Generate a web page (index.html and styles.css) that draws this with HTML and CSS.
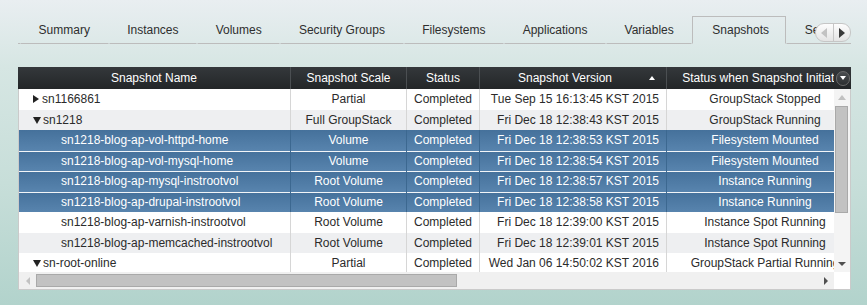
FILE: index.html
```html
<!DOCTYPE html>
<html lang="en">
<head>
    <meta charset="UTF-8" />
    <title>Snapshots</title>
    <link rel="stylesheet" href="styles.css">
</head>
<body>
    <div class="page">
        <div class="tabs">
            <div class="tab-strip">
                <div class="tab-lead"></div>
                <div class="tab">Summary</div>
                <div class="tab">Instances</div>
                <div class="tab">Volumes</div>
                <div class="tab">Security Groups</div>
                <div class="tab">Filesystems</div>
                <div class="tab">Applications</div>
                <div class="tab">Variables</div>
                <div class="tab active">Snapshots</div>
                <div class="tab">Settings</div>
                <div class="tab">Monitoring</div>
            </div>
            <div class="tab-scroller">
                <span class="ts-btn"><i class="arr-left off"></i></span>
                <span class="ts-btn"><i class="arr-right"></i></span>
            </div>
        </div>

        <div class="grid">
            <div class="grid-head">
                <div class="head-cells">
                    <div class="hc c-name">Snapshot Name</div>
                    <div class="hc c-scale">Snapshot Scale</div>
                    <div class="hc c-status">Status</div>
                    <div class="hc c-version sorted">Snapshot Version<i class="sort-up"></i></div>
                    <div class="hc c-when">Status when Snapshot Initiated</div>
                </div>
                <div class="head-corner"><span class="menu-btn"><i class="arr-down small"></i></span></div>
            </div>

            <div class="grid-body">
                <div class="rows">
                    <div class="row">
                        <div class="cell c-name parent"><i class="arr-right"></i>sn1166861</div>
                        <div class="cell c-scale">Partial</div>
                        <div class="cell c-status">Completed</div>
                        <div class="cell c-version">Tue Sep 15 16:13:45 KST 2015</div>
                        <div class="cell c-when">GroupStack Stopped</div>
                    </div>
                    <div class="row alt">
                        <div class="cell c-name parent"><i class="arr-down"></i>sn1218</div>
                        <div class="cell c-scale">Full GroupStack</div>
                        <div class="cell c-status">Completed</div>
                        <div class="cell c-version">Fri Dec 18 12:38:43 KST 2015</div>
                        <div class="cell c-when">GroupStack Running</div>
                    </div>
                    <div class="row sel">
                        <div class="cell c-name child">sn1218-blog-ap-vol-httpd-home</div>
                        <div class="cell c-scale">Volume</div>
                        <div class="cell c-status">Completed</div>
                        <div class="cell c-version">Fri Dec 18 12:38:53 KST 2015</div>
                        <div class="cell c-when">Filesystem Mounted</div>
                    </div>
                    <div class="row sel">
                        <div class="cell c-name child">sn1218-blog-ap-vol-mysql-home</div>
                        <div class="cell c-scale">Volume</div>
                        <div class="cell c-status">Completed</div>
                        <div class="cell c-version">Fri Dec 18 12:38:54 KST 2015</div>
                        <div class="cell c-when">Filesystem Mounted</div>
                    </div>
                    <div class="row sel">
                        <div class="cell c-name child">sn1218-blog-ap-mysql-instrootvol</div>
                        <div class="cell c-scale">Root Volume</div>
                        <div class="cell c-status">Completed</div>
                        <div class="cell c-version">Fri Dec 18 12:38:57 KST 2015</div>
                        <div class="cell c-when">Instance Running</div>
                    </div>
                    <div class="row sel">
                        <div class="cell c-name child">sn1218-blog-ap-drupal-instrootvol</div>
                        <div class="cell c-scale">Root Volume</div>
                        <div class="cell c-status">Completed</div>
                        <div class="cell c-version">Fri Dec 18 12:38:58 KST 2015</div>
                        <div class="cell c-when">Instance Running</div>
                    </div>
                    <div class="row">
                        <div class="cell c-name child">sn1218-blog-ap-varnish-instrootvol</div>
                        <div class="cell c-scale">Root Volume</div>
                        <div class="cell c-status">Completed</div>
                        <div class="cell c-version">Fri Dec 18 12:39:00 KST 2015</div>
                        <div class="cell c-when">Instance Spot Running</div>
                    </div>
                    <div class="row alt">
                        <div class="cell c-name child">sn1218-blog-ap-memcached-instrootvol</div>
                        <div class="cell c-scale">Root Volume</div>
                        <div class="cell c-status">Completed</div>
                        <div class="cell c-version">Fri Dec 18 12:39:01 KST 2015</div>
                        <div class="cell c-when">Instance Spot Running</div>
                    </div>
                    <div class="row">
                        <div class="cell c-name parent"><i class="arr-down"></i>sn-root-online</div>
                        <div class="cell c-scale">Partial</div>
                        <div class="cell c-status">Completed</div>
                        <div class="cell c-version">Wed Jan 06 14:50:02 KST 2016</div>
                        <div class="cell c-when">GroupStack Partial Running</div>
                    </div>
                </div>
                <div class="vscroll">
                    <div class="sb-btn"><i class="arr-up off"></i></div>
                    <div class="v-thumb"></div>
                    <div class="sb-fill"></div>
                    <div class="sb-btn"><i class="arr-down dark"></i></div>
                </div>
            </div>

            <div class="grid-foot">
                <div class="hscroll">
                    <div class="sb-btn"><i class="arr-left off"></i></div>
                    <div class="h-thumb"></div>
                    <div class="sb-fill"></div>
                    <div class="sb-btn"><i class="arr-right dark"></i></div>
                </div>
                <div class="foot-corner"></div>
            </div>
        </div>
    </div>
</body>
</html>
```

FILE: styles.css
```css
html, body {
    margin: 0;
    padding: 0;
    height: 100%;
}

body {
    background: linear-gradient(to bottom, #e9eef1 0%, #d6e6e3 22%, #c7ded9 60%, #b2d3cc 100%);
    font-family: "Liberation Sans", Arial, sans-serif;
    font-size: 12px;
    color: #2b2b2b;
}

.page {
    padding: 16px 16px 0 18px;
    width: 833px;
}

/* tabs */
.tabs {
    position: relative;
}

.tab-strip {
    display: flex;
    overflow: hidden;
    width: 833px;
}

.tab-lead {
    width: 2px;
    flex-shrink: 0;
    border-bottom: 1px solid #bcbcbc;
}

.tab {
    flex-shrink: 0;
    height: 26px;
    line-height: 26px;
    padding: 0 17.6px;
    border: 1px solid transparent;
    border-bottom: 1px solid #bcbcbc;
    white-space: nowrap;
    color: #2e2e2e;
}

.tab.active {
    border-color: #bcbcbc;
    border-bottom-color: transparent;
    padding: 0 16px 0 19px;
}

.tab-scroller {
    position: absolute;
    left: 797px;
    top: 7px;
    width: 34px;
    height: 17px;
    border: 1px solid #c6c6c6;
    border-radius: 9px;
    background: linear-gradient(to bottom, #fdfdfd, #e4e4e4);
    display: flex;
    overflow: hidden;
}

.ts-btn {
    flex: 1;
    display: flex;
    align-items: center;
    justify-content: center;
}

.ts-btn + .ts-btn {
    border-left: 1px solid #c6c6c6;
}

/* little triangles */
.arr-left, .arr-right, .arr-up, .arr-down, .sort-up {
    display: inline-block;
    width: 0;
    height: 0;
}

.arr-right {
    border-top: 4px solid transparent;
    border-bottom: 4px solid transparent;
    border-left: 6px solid #222;
}

.arr-left {
    border-top: 4px solid transparent;
    border-bottom: 4px solid transparent;
    border-right: 6px solid #222;
}

.arr-down {
    border-left: 4px solid transparent;
    border-right: 4px solid transparent;
    border-top: 7px solid #222;
}

.arr-up {
    border-left: 4px solid transparent;
    border-right: 4px solid transparent;
    border-bottom: 5px solid #222;
}

.arr-left.off { border-right-color: #c2c2c2; }
.arr-up.off { border-bottom-color: #c2c2c2; }
.arr-right.dark { border-left-color: #505050; border-left-width: 4px; border-top-width: 4px; border-bottom-width: 4px; }
.arr-down.dark { border-top-color: #505050; border-top-width: 4px; }
.ts-btn .arr-left, .ts-btn .arr-right { border-top-width: 5px; border-bottom-width: 5px; }
.ts-btn .arr-right { border-left-color: #3a3a3a; border-left-width: 6px; }
.hscroll .arr-left { border-top-width: 4px; border-bottom-width: 4px; border-right-width: 4px; }

/* grid */
.grid {
    margin-top: 23px;
    width: 831px;
    border: 1px solid #cacaca;
    border-top: none;
    background: #fff;
}

.grid-head {
    display: flex;
    height: 22px;
    margin: 0 -1px;
    background: linear-gradient(to bottom, #34383b, #232628);
    color: #fff;
}

.head-cells {
    display: flex;
    width: 816px;
    overflow: hidden;
}

.hc {
    flex-shrink: 0;
    box-sizing: border-box;
    line-height: 22px;
    text-align: center;
    white-space: nowrap;
    border-right: 1px solid #4b4f52;
    position: relative;
}

.hc.c-name { width: 273px; }
.hc.sorted { padding-right: 16px; }

.sort-up {
    position: absolute;
    right: 11px;
    top: 9px;
    border-left: 3px solid transparent;
    border-right: 3px solid transparent;
    border-bottom: 4px solid #fff;
}

.head-corner {
    width: 17px;
    display: flex;
    align-items: center;
}

.menu-btn {
    width: 12px;
    height: 13px;
    border-radius: 7px;
    border: 1px solid #6a6a6a;
    background: linear-gradient(to bottom, #4a4d50, #2c2f31);
    display: flex;
    align-items: center;
    justify-content: center;
    margin-left: 2px;
}

.arr-down.small {
    border-left-width: 3px;
    border-right-width: 3px;
    border-top: 4px solid #fff;
}

.grid-body {
    display: flex;
    height: 183px;
}

.rows {
    width: 815px;
    overflow: hidden;
}

.row {
    display: flex;
    height: 20.5px;
    line-height: 20.5px;
    background: #fff;
}

.row.alt {
    background: #eeeff1;
}

.row.sel {
    background: linear-gradient(to bottom, #45719b, #5884ae);
    color: #fff;
}

.row.sel + .row.sel {
    box-shadow: inset 0 1px 0 #f2f5f8;
}

.cell {
    flex-shrink: 0;
    box-sizing: border-box;
    white-space: nowrap;
    overflow: hidden;
    border-right: 1px solid #d6d6d6;
    padding: 0 6px;
}

.row.sel .cell {
    border-right-color: #3c6890;
}

.c-name { width: 272px; }
.c-scale { width: 116px; text-align: center; }
.c-status { width: 73px; text-align: center; padding: 0; }
.c-version { width: 187px; text-align: right; padding-right: 7px; }
.c-when { width: 196px; text-align: center; border-right: none; }
.hc.c-version { text-align: center; }

.cell.parent {
    padding-left: 14px;
}

.cell.parent i {
    margin-right: 2px;
    vertical-align: 0;
}

.cell.parent .arr-right {
    border-top-width: 4px;
    border-bottom-width: 4px;
    border-left-width: 6px;
    margin-right: 3px;
}

.cell.child {
    padding-left: 42px;
}

/* scrollbars */
.vscroll {
    width: 16px;
    background: #f4f4f4;
    display: flex;
    flex-direction: column;
}

.sb-btn {
    width: 16px;
    height: 17px;
    flex-shrink: 0;
    display: flex;
    align-items: center;
    justify-content: center;
}

.sb-fill {
    flex: 1;
}

.v-thumb {
    height: 105px;
    margin: 0 2px 0 1px;
    background: #c2c2c2;
    border: 1px solid #a9a9a9;
}

.grid-foot {
    display: flex;
    height: 17px;
}

.hscroll {
    width: 815px;
    background: #f0f0f0;
    display: flex;
}

.hscroll .sb-btn {
    width: 17px;
    height: 17px;
}

.h-thumb {
    width: 419px;
    margin: 2px 0 2px 0;
    background: #c2c2c2;
    border: 1px solid #a9a9a9;
}

.foot-corner {
    width: 16px;
    background: #fff;
}
```
